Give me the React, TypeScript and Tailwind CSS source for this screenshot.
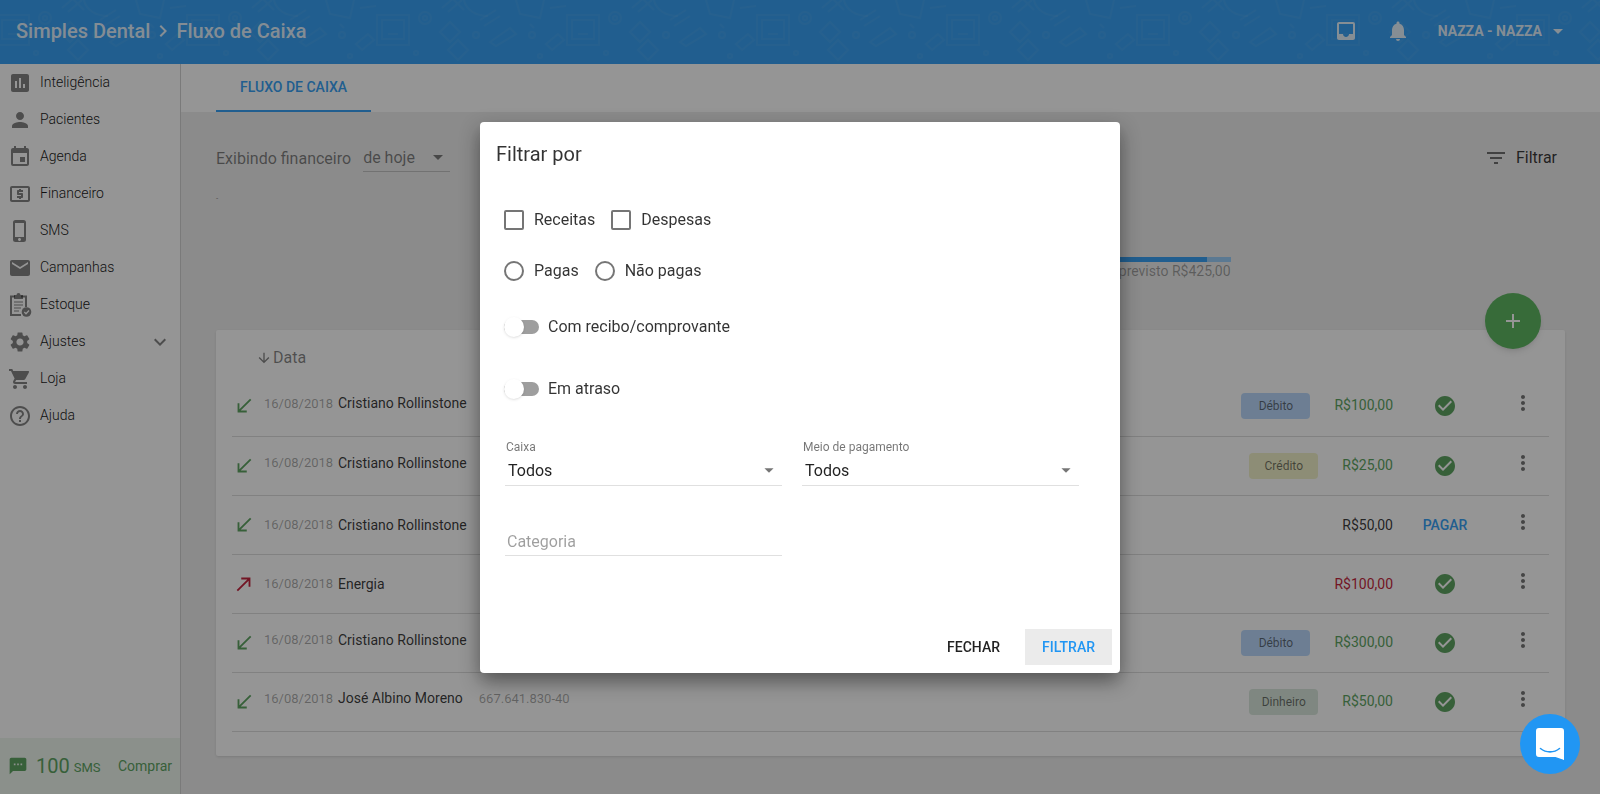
import { MdInsertChart, MdPerson, MdEvent, MdLocalAtm, MdPhoneIphone, MdEmail, MdSettings, MdShoppingCart, MdHelpOutline, MdArrowDownward, MdFilterList, MdAdd, MdCheckCircle, MdMoreVert, MdCallReceived, MdCallMade, MdInbox, MdNotifications, MdArrowDropDown, MdTextsms, MdExpandMore, MdChevronRight } from "react-icons/md";
import type { ComponentType } from "react";

function StockIcon({ className }: { className?: string }) {
  return (
    <svg viewBox="0 0 24 24" className={className} fill="none" stroke="currentColor">
      <path d="M7 3.500H3V22h10" strokeWidth="2" />
      <path d="M13 3.500h5V14" strokeWidth="2" />
      <path d="M6 2h2.500a2 2 0 0 1 4 0H15v4H6z" fill="currentColor" stroke="none" />
      <path d="M6 9h9M6 12h9M6 15h7M6 18h5" strokeWidth="1" />
      <circle cx="18.500" cy="19" r="4.800" fill="currentColor" stroke="none" />
      <path d="m16.300 19 1.700 1.700 3-3.200" stroke="#fff" strokeWidth="1.300" />
    </svg>
  );
}

type Icon = ComponentType<{ className?: string }>;

const menu: { label: string; icon: Icon; expandable?: boolean }[] = [
  { label: "Inteligência", icon: MdInsertChart },
  { label: "Pacientes", icon: MdPerson },
  { label: "Agenda", icon: MdEvent },
  { label: "Financeiro", icon: MdLocalAtm },
  { label: "SMS", icon: MdPhoneIphone },
  { label: "Campanhas", icon: MdEmail },
  { label: "Estoque", icon: StockIcon },
  { label: "Ajustes", icon: MdSettings, expandable: true },
  { label: "Loja", icon: MdShoppingCart },
  { label: "Ajuda", icon: MdHelpOutline },
];

type Entry = {
  name: string;
  doc?: string;
  out?: boolean;
  method?: string;
  badge?: string;
  value: string;
  tone: string;
  paid: boolean;
};

const entries: Entry[] = [
  { name: "Cristiano Rollinstone", method: "Débito", badge: "bg-[#b3d4fc]", value: "R$100,00", tone: "text-[#4c9950]", paid: true },
  { name: "Cristiano Rollinstone", method: "Crédito", badge: "bg-[#f0f0c3]", value: "R$25,00", tone: "text-[#4c9950]", paid: true },
  { name: "Cristiano Rollinstone", value: "R$50,00", tone: "text-black/87", paid: false },
  { name: "Energia", out: true, value: "R$100,00", tone: "text-[#bd0a28]", paid: true },
  { name: "Cristiano Rollinstone", method: "Débito", badge: "bg-[#b3d4fc]", value: "R$300,00", tone: "text-[#4c9950]", paid: true },
  { name: "José Albino Moreno", doc: "667.641.830-40", method: "Dinheiro", badge: "bg-[#d5e5d8]", value: "R$50,00", tone: "text-[#4c9950]", paid: true },
];

function HeaderPattern() {
  return (
    <svg className="absolute inset-0 h-full w-full" aria-hidden="true">
      <defs>
        <pattern id="header-pattern" width="190" height="190" patternUnits="userSpaceOnUse">
          <g fill="none" stroke="#7fb8e8" strokeOpacity="0.11" strokeWidth="2">
            <rect x="-3" y="15" width="32" height="30" />
            <rect x="187" y="15" width="32" height="30" />
            <rect x="2" y="20" width="22" height="19" />
            <path d="M8 34h10" />
            <path d="m60 32 10 10 10-10-10-10zM68 50l10-10 10 10-10 10z" />
            <path d="m62 8 14-12M68 12l14-12M70-4l14 14M100 20l16-10M104 26l16-10" />
            <circle cx="45" cy="18" r="6" />
            <circle cx="45" cy="18" r="2" />
            <circle cx="96" cy="35" r="3" />
            <path d="M84 0c2 10 12 16 24 16M136 0l4 14 20 4 4-18M110 42l20-14 6 6-20 12z" />
            <path d="m166 44 12-10 6 6-12 10zM150 24l4 4M170 8l16-2" />
            <circle cx="152" cy="35" r="3" />
            <circle cx="36" cy="53" r="2" />
            <circle cx="160" cy="56" r="2" />
          </g>
        </pattern>
      </defs>
      <rect width="100%" height="100%" fill="url(#header-pattern)" />
    </svg>
  );
}

function Header() {
  return (
    <header className="relative flex h-16 shrink-0 items-center justify-between bg-[#2196f3] pb-0.5 pl-4 pr-[30px] text-white/87">
      <HeaderPattern />
      <h1 className="relative flex items-center gap-px text-xl font-medium">
        Simples Dental
        <MdChevronRight className="size-6" />
        Fluxo de Caixa
      </h1>
      <div className="relative flex items-center">
        <button aria-label="Caixa de entrada" className="mr-7">
          <MdInbox className="size-6" />
        </button>
        <button aria-label="Notificações" className="mr-7">
          <MdNotifications className="size-6" />
        </button>
        <button className="flex items-center gap-1 text-sm font-bold">
          NAZZA - NAZZA
          <MdArrowDropDown className="size-6" />
        </button>
      </div>
    </header>
  );
}

function Sidebar() {
  return (
    <aside className="flex w-[181px] shrink-0 flex-col border-r border-black/20 bg-white">
      <nav className="flex-1">
        {menu.map(({ label, icon: Glyph, expandable }) => (
          <a key={label} href="#" className="flex h-[37px] items-center px-2 text-sm font-light text-black">
            <Glyph className="mr-2 size-6 text-black/54" />
            <span className="pb-0.5">{label}</span>
            {expandable && <MdExpandMore className="ml-auto size-6 text-black/54" />}
          </a>
        ))}
      </nav>
      <div className="flex h-14 items-center bg-[#ebf5ec] px-2 text-[#4c9950]">
        <MdTextsms className="mr-2 size-5" />
        <span className="text-xl">100</span>
        <span className="ml-1 pt-1 text-[13px]">SMS</span>
        <a href="#" className="ml-auto text-sm">Comprar</a>
      </div>
    </aside>
  );
}

function EntryRow({ entry }: { entry: Entry }) {
  const Direction = entry.out ? MdCallMade : MdCallReceived;
  const lift = entry.method ? "pb-[6px]" : "";
  return (
    <tr className="h-[59px] border-b border-black/15">
      <td className={entry.out ? "w-8 pl-px text-[#bd0a28]" : "w-8 pl-px text-[#4c9950]"}>
        <Direction className="size-[22px]" />
      </td>
      <td className={`${lift} w-[74px] text-[13px] text-black/38`}>16/08/2018</td>
      <td className={`${lift} text-sm text-black/87`}>
        {entry.name}
        {entry.doc && <span className="ml-4 text-[13px] text-black/38">{entry.doc}</span>}
      </td>
      <td className="text-right text-sm">
        {entry.method && (
          <span className={`${entry.badge} mr-6 inline-block w-[69px] rounded-sm text-center text-xs leading-[26px] text-black/60`}>
            {entry.method}
          </span>
        )}
        <span className={entry.tone}>{entry.value}</span>
      </td>
      <td className="w-[104px] text-center">
        {entry.paid ? (
          <MdCheckCircle className="mx-auto size-6 text-[#4c9950]" />
        ) : (
          <button className="text-sm font-medium text-[#2196f3]">PAGAR</button>
        )}
      </td>
      <td className="w-[52px]">
        <button aria-label="Mais opções" className="mb-[6px] ml-[14px] block">
          <MdMoreVert className="size-6 text-black/60" />
        </button>
      </td>
    </tr>
  );
}

function Content() {
  return (
    <main className="flex min-w-0 flex-1 flex-col bg-[#ececec]">
      <div className="flex h-12 shrink-0 bg-white pl-[35px]">
        <a href="#" className="flex items-center border-b-2 border-[#2196f3] px-6 text-sm font-medium text-[#2196f3]">
          FLUXO DE CAIXA
        </a>
      </div>
      <div className="flex flex-1 flex-col px-[35px]">
        <div className="flex items-center pt-[31px] text-black/54">
          <label htmlFor="period" className="pt-0.5">Exibindo financeiro</label>
          <span className="relative ml-3 flex items-center border-b border-black/20">
            <select id="period" className="w-[87px] appearance-none pb-1 pt-1.5 leading-[18px] outline-none">
              <option>de hoje</option>
            </select>
            <MdArrowDropDown className="pointer-events-none absolute right-0 size-6" />
          </span>
          <button className="ml-auto mr-2 flex items-center gap-2 text-black/87">
            <MdFilterList className="size-6 text-black/60" />
            Filtrar
          </button>
        </div>
        <p className="mt-[21px] h-4 text-[8px] text-black/54">-</p>
        <div className="mx-auto mt-12 flex w-[680px] flex-col">
          <div className="flex h-[5px] bg-[#90caf9]">
            <div className="w-[656px] bg-[#2196f3]" />
          </div>
          <p className="text-right text-sm leading-[18px] text-black/38">previsto R$425,00</p>
        </div>
        <section className="relative mt-[50px] rounded-xs bg-white px-4 pb-6 shadow">
          <button aria-label="Adicionar" className="absolute -top-[37px] right-6 flex size-14 items-center justify-center rounded-full bg-[#4caf50] text-white shadow-md">
            <MdAdd className="size-6" />
          </button>
          <table className="w-full border-collapse text-left">
            <thead>
              <tr className="h-[47px] text-black/54">
                <th colSpan={6} className="pl-6 pt-2 font-normal">
                  <span className="flex items-center gap-px">
                    <MdArrowDownward className="size-4" />
                    Data
                  </span>
                </th>
              </tr>
            </thead>
            <tbody>
              {entries.map((entry, i) => (
                <EntryRow key={i} entry={entry} />
              ))}
            </tbody>
          </table>
        </section>
      </div>
    </main>
  );
}

function SelectField({ id, label }: { id: string; label: string }) {
  return (
    <div className="flex flex-col">
      <label htmlFor={id} className="pl-px text-xs text-black/54">{label}</label>
      <span className="relative flex items-center border-b border-black/12">
        <select id={id} className="h-[30px] w-full appearance-none pl-[3px] pt-0.5 text-black/87 outline-none">
          <option>Todos</option>
        </select>
        <MdArrowDropDown className="pointer-events-none absolute right-0.5 size-[22px] text-black/54" />
      </span>
    </div>
  );
}

function Toggle({ label }: { label: string }) {
  return (
    <label className="flex items-center gap-[9px]">
      <input
        type="checkbox"
        role="switch"
        className="flex h-[14px] w-[35px] appearance-none items-center rounded-full bg-[#9e9e9e] before:size-5 before:shrink-0 before:rounded-full before:bg-white before:shadow"
      />
      {label}
    </label>
  );
}

function FilterDialog() {
  return (
    <div role="dialog" aria-label="Filtrar por" className="flex w-[640px] flex-col rounded-sm bg-white text-black/80 shadow-[0_8px_20px_rgba(0,0,0,0.45)]">
      <h2 className="px-4 pt-[18px] text-xl">Filtrar por</h2>
      <form className="flex flex-col pl-6 pr-[41px] pt-10">
        <div className="flex gap-4">
          {["Receitas", "Despesas"].map((label) => (
            <label key={label} className="flex items-center gap-2.5">
              <input type="checkbox" className="size-5 appearance-none rounded-xs border-2 border-black/54" />
              {label}
            </label>
          ))}
        </div>
        <div className="mt-[27px] flex gap-4">
          {["Pagas", "Não pagas"].map((label) => (
            <label key={label} className="flex items-center gap-2.5">
              <input type="radio" name="status" className="size-5 appearance-none rounded-full border-2 border-black/54" />
              {label}
            </label>
          ))}
        </div>
        <div className="mt-8 flex flex-col gap-[38px]">
          <Toggle label="Com recibo/comprovante" />
          <Toggle label="Em atraso" />
        </div>
        <div className="mt-[38px] grid grid-cols-2 gap-x-5 gap-y-[39px] pl-px">
          <SelectField id="caixa" label="Caixa" />
          <SelectField id="meio" label="Meio de pagamento" />
          <input aria-label="Categoria" placeholder="Categoria" className="h-[31px] border-b border-black/12 pl-0.5 pt-1 outline-none placeholder:text-black/38" />
        </div>
      </form>
      <div className="mt-[65px] flex justify-end gap-2 p-2 text-sm font-medium">
        <button className="h-9 px-[17px] text-black/87">FECHAR</button>
        <button className="h-9 bg-[#ebebeb] px-[17px] text-[#2196f3]">FILTRAR</button>
      </div>
    </div>
  );
}

export default function App() {
  return (
    <div className="relative flex min-h-screen flex-col font-[Roboto,sans-serif] text-base">
      <Header />
      <div className="flex flex-1">
        <Sidebar />
        <Content />
      </div>
      <div className="fixed inset-0 flex items-center justify-center bg-[#212121]/48">
        <FilterDialog />
      </div>
      <button aria-label="Abrir chat" className="fixed bottom-5 right-5 flex size-[60px] items-center justify-center rounded-full bg-[#2196f3]">
        <svg viewBox="0 0 28 32" className="h-8 w-7">
          <path d="M28 32s-4.700-1.900-8.500-3H3a3 3 0 0 1-3-3V3a3 3 0 0 1 3-3h22a3 3 0 0 1 3 3z" fill="#fff" />
          <path d="M4.500 20.500c5.500 4.500 13.500 4.500 19 0" fill="none" stroke="#2196f3" strokeWidth="1.600" strokeLinecap="round" />
        </svg>
      </button>
    </div>
  );
}
